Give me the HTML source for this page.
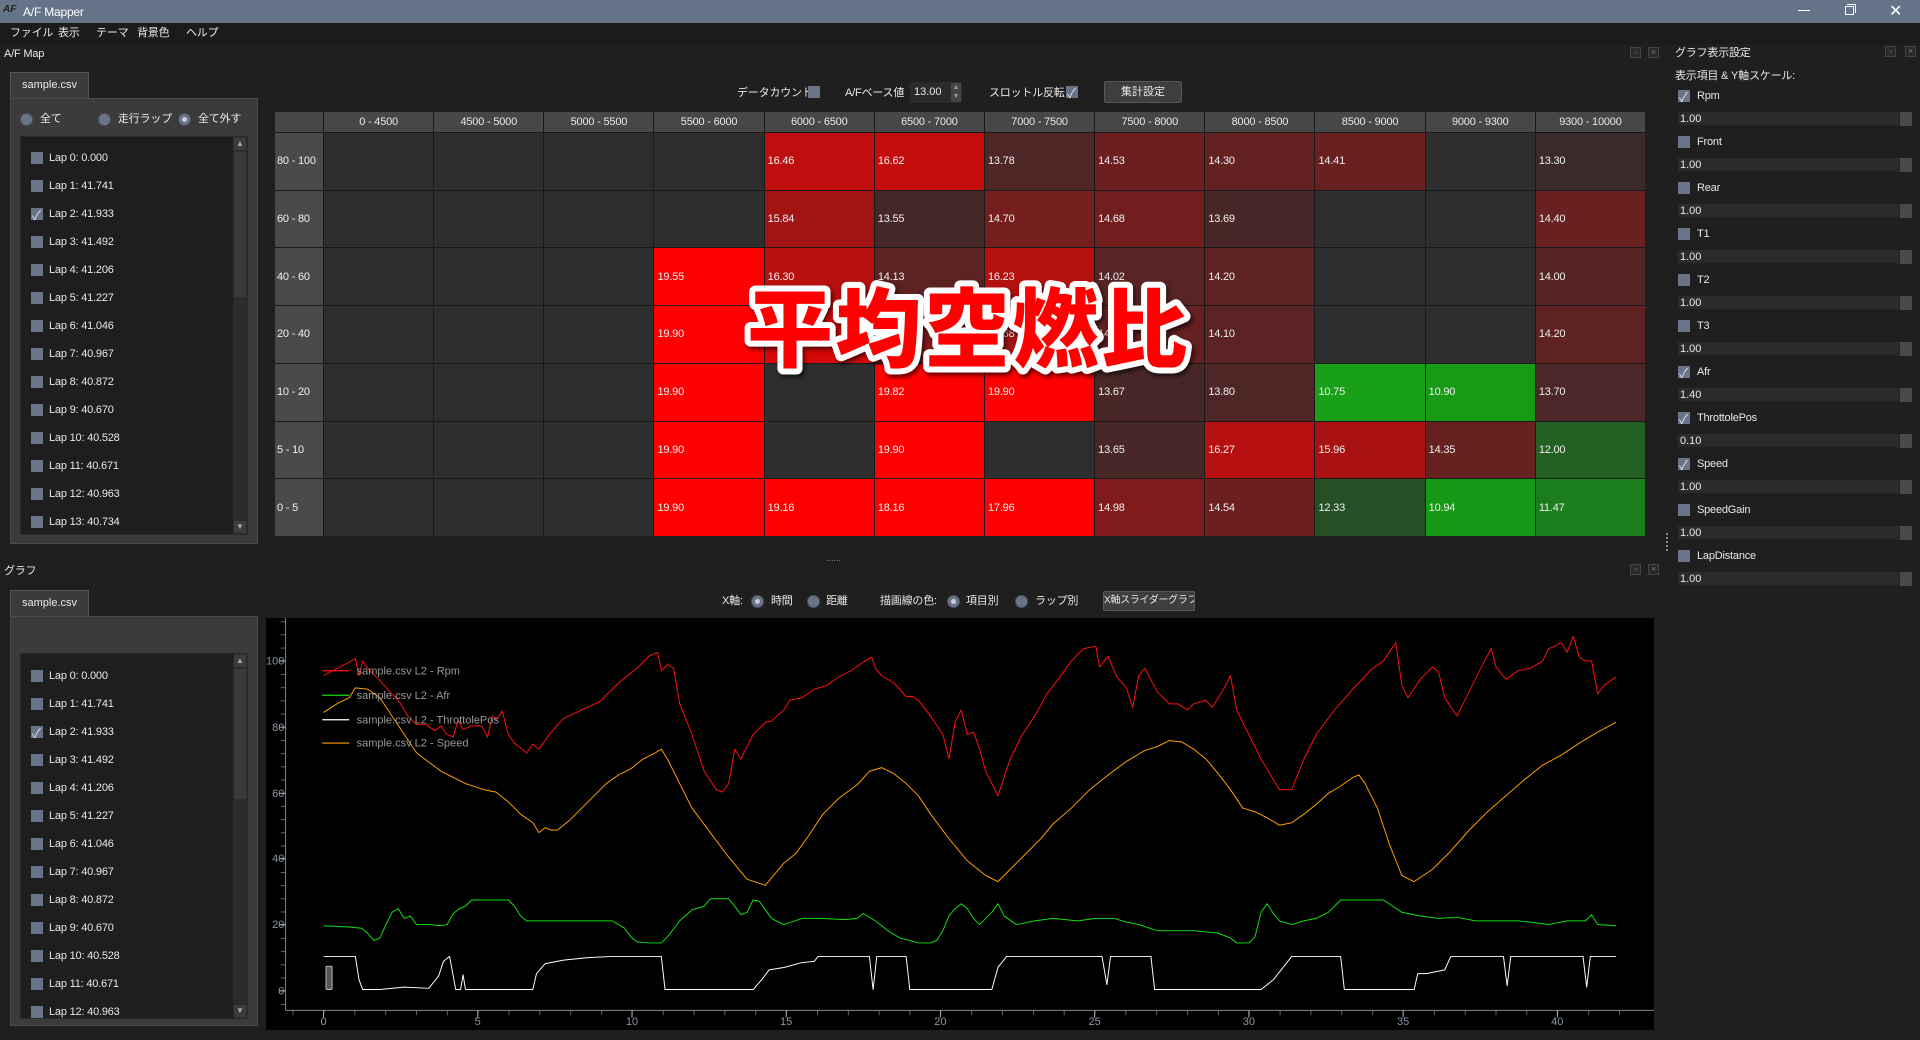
<!DOCTYPE html>
<html><head><meta charset="utf-8">
<style>
*{box-sizing:border-box;margin:0;padding:0}
body{width:1920px;height:1040px;background:#1f1f1f;position:relative;overflow:hidden;font-family:"Liberation Sans","Noto Sans CJK JP",sans-serif;color:#e8e8e8;font-size:11px}
.a{position:absolute;white-space:nowrap}
.t{position:absolute;white-space:nowrap;line-height:14px;font-size:11px;letter-spacing:-0.2px}
.cb{position:absolute;width:12px;height:12px;background:#6a7488}
.cb.k::after{content:"✓";position:absolute;left:1px;top:-3px;font-size:13px;color:#d8dde6}
.rd{position:absolute;width:13px;height:13px;border-radius:50%;background:#6a7488;border:1px solid #4a5262}
.rd.on::after{content:"";position:absolute;left:3px;top:3px;width:5px;height:5px;border-radius:50%;background:#c8ccd4}
.spin{position:absolute;left:1678px;width:234px;height:14px;background:#2b2b2b;border-bottom:1px solid #202020;font-size:11px;line-height:14px;padding-left:2px}
.spin::after{content:"";position:absolute;right:0;top:0;width:12px;height:14px;background:#4a4a4a;border-left:1px solid #222}
.grid{position:absolute;left:275px;top:112px;width:1370px;height:424px;display:grid;grid-template-columns:48px repeat(12,1fr);grid-template-rows:20px repeat(7,1fr);gap:1px;background:#1a1a1a}
.grid div{background:#2e2e2e;font-size:11px;display:flex;align-items:center;padding-left:3px;color:#f0f0f0;letter-spacing:-0.2px}
.grid .h{background:#474747;justify-content:center;padding:0;color:#e8e8e8}
.grid .h0{background:#474747}
.grid .rh{background:#4a4a4a;padding-left:2px}
.panel{position:absolute;left:10px;width:248px;background:#3b3b3b;border:1px solid #4a4a4a}
.tab{position:absolute;left:10px;width:79px;height:26px;background:#3b3b3b;border:1px solid #555;border-bottom:none;font-size:11px;line-height:24px;text-align:center}
.list{position:absolute;left:20px;width:228px;background:#1e1e1e;border:1px solid #2a2a2a;overflow:hidden}
.sb{position:absolute;right:0;top:0;width:14px;height:100%;background:#2c2c2c}
.dk{position:absolute;width:11px;height:11px;border:1px solid #444;background:#2a2a2a;color:#777;font-size:9px;line-height:9px;text-align:center}
.btn{position:absolute;background:#3e3e3e;border:1px solid #585858;border-radius:2px;text-align:center;font-size:11px;white-space:nowrap;overflow:hidden}
</style></head><body>
<div class="a" style="left:0;top:0;width:1920px;height:23px;background:#667489"></div>
<div class="a" style="left:3px;top:4px;font-size:10px;font-style:italic;font-weight:bold;color:#222">AF</div>
<div class="t" style="left:23px;top:5px;font-size:12px;color:#fff">A/F Mapper</div>
<div class="a" style="left:1798px;top:10px;width:12px;height:1px;background:#fff"></div>
<div class="a" style="left:1845px;top:6px;width:9px;height:9px;border:1px solid #fff"></div>
<div class="a" style="left:1847px;top:4px;width:9px;height:9px;border-top:1px solid #fff;border-right:1px solid #fff"></div>
<div class="a" style="left:1889px;top:1px;font-size:16px;color:#fff">✕</div>
<div class="a" style="left:0;top:23px;width:1920px;height:21px;background:#1b1b1b"></div>
<div class="t" style="left:10px;top:26px">ファイル</div>
<div class="t" style="left:58px;top:26px">表示</div>
<div class="t" style="left:96px;top:26px">テーマ</div>
<div class="t" style="left:137px;top:26px">背景色</div>
<div class="t" style="left:186px;top:26px">ヘルプ</div>
<div class="t" style="left:4px;top:47px">A/F Map</div>
<div class="dk" style="left:1630px;top:47px">▫</div><div class="dk" style="left:1648px;top:47px">×</div>

<div class="tab" style="top:72px">sample.csv</div>
<div class="panel" style="top:98px;height:446px"></div>
<div class="rd" style="left:20px;top:113px"></div><div class="t" style="left:40px;top:112px">全て</div>
<div class="rd" style="left:98px;top:113px"></div><div class="t" style="left:118px;top:112px">走行ラップ</div>
<div class="rd on" style="left:178px;top:113px"></div><div class="t" style="left:198px;top:112px">全て外す</div>
<div class="list" style="top:136px;height:399px">
 <div class="sb"><div style="position:absolute;left:1px;top:1px;width:12px;height:12px;background:#3c3c3c;color:#aaa;font-size:8px;text-align:center;line-height:12px">▲</div><div style="position:absolute;left:1px;top:15px;width:12px;height:145px;background:#3a3a3a"></div><div style="position:absolute;left:1px;bottom:1px;width:12px;height:12px;background:#3c3c3c;color:#aaa;font-size:8px;text-align:center;line-height:12px">▼</div></div>
</div>

<div class="t" style="left:737px;top:86px">データカウント</div>
<div class="cb" style="left:808px;top:86px"></div>
<div class="t" style="left:845px;top:86px">A/Fベース値</div>
<div class="a" style="left:910px;top:82px;width:52px;height:21px;background:#2b2b2b;border-radius:2px"><span style="position:absolute;left:4px;top:4px;font-size:11px">13.00</span><span style="position:absolute;right:1px;top:1px;width:10px;height:19px;background:#444;color:#999;font-size:7px;line-height:9px;text-align:center">▲<br>▼</span></div>
<div class="t" style="left:989px;top:86px">スロットル反転</div>
<div class="cb k" style="left:1066px;top:86px"></div>
<div class="btn" style="left:1104px;top:81px;width:78px;height:22px;line-height:20px">集計設定</div>

<div class="grid">
<div class="h0"></div><div class="h">0 - 4500</div><div class="h">4500 - 5000</div><div class="h">5000 - 5500</div><div class="h">5500 - 6000</div><div class="h">6000 - 6500</div><div class="h">6500 - 7000</div><div class="h">7000 - 7500</div><div class="h">7500 - 8000</div><div class="h">8000 - 8500</div><div class="h">8500 - 9000</div><div class="h">9000 - 9300</div><div class="h">9300 - 10000</div>
<div class="rh">80 - 100</div><div></div><div></div><div></div><div></div><div style="background:#be0e0e">16.46</div><div style="background:#c50c0c">16.62</div><div style="background:#4e2626">13.78</div><div style="background:#6d1f1f">14.53</div><div style="background:#642121">14.30</div><div style="background:#682020">14.41</div><div></div><div style="background:#3a2a2a">13.30</div>
<div class="rh">60 - 80</div><div></div><div></div><div></div><div></div><div style="background:#a41313">15.84</div><div style="background:#442828">13.55</div><div style="background:#741e1e">14.70</div><div style="background:#731e1e">14.68</div><div style="background:#4a2727">13.69</div><div></div><div></div><div style="background:#682020">14.40</div>
<div class="rh">40 - 60</div><div></div><div></div><div></div><div style="background:#ff0000">19.55</div><div style="background:#b80f0f">16.30</div><div style="background:#5c2323">14.13</div><div style="background:#b51010">16.23</div><div style="background:#582424">14.02</div><div style="background:#5f2222">14.20</div><div></div><div></div><div style="background:#572424">14.00</div>
<div class="rh">20 - 40</div><div></div><div></div><div></div><div style="background:#ff0000">19.90</div><div style="background:#d90808">17.10</div><div style="background:#811b1b">15.00</div><div style="background:#9e1515">15.68</div><div style="background:#642121">14.30</div><div style="background:#5b2323">14.10</div><div></div><div></div><div style="background:#5f2222">14.20</div>
<div class="rh">10 - 20</div><div></div><div></div><div></div><div style="background:#ff0000">19.90</div><div></div><div style="background:#ff0000">19.82</div><div style="background:#ff0000">19.90</div><div style="background:#4a2727">13.67</div><div style="background:#4f2626">13.80</div><div style="background:#18a018">10.75</div><div style="background:#179b17">10.90</div><div style="background:#4b2727">13.70</div>
<div class="rh">5 - 10</div><div></div><div></div><div></div><div style="background:#ff0000">19.90</div><div></div><div style="background:#ff0000">19.90</div><div></div><div style="background:#4a2727">13.65</div><div style="background:#b61010">16.27</div><div style="background:#a91212">15.96</div><div style="background:#662121">14.35</div><div style="background:#226122">12.00</div>
<div class="rh">0 - 5</div><div></div><div></div><div></div><div style="background:#ff0000">19.90</div><div style="background:#ff0000">19.16</div><div style="background:#ff0000">18.16</div><div style="background:#fd0000">17.96</div><div style="background:#801b1b">14.98</div><div style="background:#6d1f1f">14.54</div><div style="background:#255025">12.33</div><div style="background:#169916">10.94</div><div style="background:#1c7d1c">11.47</div>
</div>
<svg class="a" style="left:735px;top:270px" width="470" height="110">
<text x="12" y="90" font-family="Noto Sans CJK JP,sans-serif" font-weight="900" font-size="86" textLength="440" fill="#ff0000" stroke="#ffffff" stroke-width="12" stroke-linejoin="round" paint-order="stroke" style="filter:drop-shadow(2px 3px 2px rgba(0,0,0,.6))">平均空燃比</text>
</svg>

<div class="a" style="left:826px;top:553px;color:#888;font-size:9px">......</div>
<div class="a" style="left:1666px;top:533px;width:2px;height:18px;border-left:2px dotted #888"></div>

<div class="t" style="left:4px;top:564px">グラフ</div>
<div class="dk" style="left:1630px;top:564px">▫</div><div class="dk" style="left:1648px;top:564px">×</div>
<div class="tab" style="top:590px">sample.csv</div>
<div class="panel" style="top:616px;height:410px"></div>
<div class="list" style="top:653px;height:366px">
 <div class="sb"><div style="position:absolute;left:1px;top:1px;width:12px;height:12px;background:#3c3c3c;color:#aaa;font-size:8px;text-align:center;line-height:12px">▲</div><div style="position:absolute;left:1px;top:15px;width:12px;height:130px;background:#3a3a3a"></div><div style="position:absolute;left:1px;bottom:1px;width:12px;height:12px;background:#3c3c3c;color:#aaa;font-size:8px;text-align:center;line-height:12px">▼</div></div>
</div>

<div class="t" style="left:722px;top:594px">X軸:</div>
<div class="rd on" style="left:751px;top:595px"></div><div class="t" style="left:771px;top:594px">時間</div>
<div class="rd" style="left:807px;top:595px"></div><div class="t" style="left:826px;top:594px">距離</div>
<div class="t" style="left:880px;top:594px">描画線の色:</div>
<div class="rd on" style="left:947px;top:595px"></div><div class="t" style="left:966px;top:594px">項目別</div>
<div class="rd" style="left:1015px;top:595px"></div><div class="t" style="left:1035px;top:594px">ラップ別</div>
<div class="btn" style="left:1103px;top:591px;width:92px;height:20px;line-height:18px;font-size:10px;letter-spacing:-0.3px">X軸スライダーグラフ</div>

<svg class="a" style="left:266px;top:618px" width="1388" height="412" viewBox="217 505 1134 336" preserveAspectRatio="none">
<defs>
<pattern id="xt" patternUnits="userSpaceOnUse" x="264" y="0" width="25.2" height="900"><line x1="0.3" y1="825" x2="0.3" y2="829" stroke="#888" stroke-width="0.6"/></pattern>
<pattern id="yt" patternUnits="userSpaceOnUse" x="0" y="809" width="300" height="10.76"><line x1="229" y1="0.3" x2="233" y2="0.3" stroke="#888" stroke-width="0.6"/></pattern>
</defs>
<rect x="217" y="505" width="1134" height="336" fill="#000"/>
<rect x="225" y="505" width="9" height="320" fill="url(#yt)"/>
<rect x="233" y="820" width="1110" height="10" fill="url(#xt)"/>
<line x1="233" y1="505" x2="233" y2="825" stroke="#888" stroke-width="0.8"/>
<line x1="233" y1="825" x2="1351" y2="825" stroke="#888" stroke-width="0.8"/>
<g stroke="#aaa" stroke-width="0.8"><line x1="228" y1="540" x2="233" y2="540"/><line x1="228" y1="594" x2="233" y2="594"/><line x1="228" y1="648" x2="233" y2="648"/><line x1="228" y1="701" x2="233" y2="701"/><line x1="228" y1="755" x2="233" y2="755"/><line x1="228" y1="809" x2="233" y2="809"/>
<line x1="264" y1="825" x2="264" y2="831"/><line x1="390" y1="825" x2="390" y2="831"/><line x1="516" y1="825" x2="516" y2="831"/><line x1="642" y1="825" x2="642" y2="831"/><line x1="768" y1="825" x2="768" y2="831"/><line x1="894" y1="825" x2="894" y2="831"/><line x1="1020" y1="825" x2="1020" y2="831"/><line x1="1146" y1="825" x2="1146" y2="831"/><line x1="1272" y1="825" x2="1272" y2="831"/></g>
<g font-family="Liberation Sans,sans-serif" font-size="9" fill="#8a96a8" text-anchor="end">
<text x="232" y="543">100</text><text x="232" y="597">80</text><text x="232" y="651">60</text><text x="232" y="704">40</text><text x="232" y="758">20</text><text x="232" y="812">0</text></g>
<g font-family="Liberation Sans,sans-serif" font-size="9" fill="#8a96a8" text-anchor="middle">
<text x="264" y="837">0</text><text x="390" y="837">5</text><text x="516" y="837">10</text><text x="642" y="837">15</text><text x="768" y="837">20</text><text x="894" y="837">25</text><text x="1020" y="837">30</text><text x="1146" y="837">35</text><text x="1272" y="837">40</text></g>
<g fill="none" stroke-width="0.8" stroke-linejoin="round">
<polyline stroke="#ff1010" points="264,552 275,546 285,541 290,538 293,552 296,540 300,546 310,556 318,565 325,572 333,585 340,592 348,592 355,597 360,593 365,600 370,602 374,588 378,596 385,593 393,593 398,602 402,585 405,588 410,581 415,600 420,607 430,615 435,608 440,612 450,598 460,587 475,580 490,573 505,558 520,546 530,536 537,533 540,548 545,543 550,546 555,575 565,600 575,630 585,645 590,647 595,640 600,612 605,620 615,600 625,590 630,589 640,580 645,572 655,570 665,563 675,560 685,553 695,548 705,541 712,537 715,546 720,552 730,558 740,569 745,569 750,572 760,585 770,600 775,620 780,590 785,580 790,600 795,598 800,612 805,630 810,640 815,650 820,635 825,620 835,600 845,585 855,567 865,554 875,540 885,530 895,528 898,545 905,536 912,553 920,562 925,578 930,552 935,546 945,565 955,575 962,575 970,580 975,575 985,572 990,578 995,570 1000,562 1005,552 1010,580 1020,600 1030,620 1045,645 1055,645 1065,620 1075,600 1090,580 1105,563 1120,547 1130,540 1140,525 1145,560 1150,570 1160,555 1170,545 1175,549 1180,570 1190,585 1200,565 1210,545 1218,530 1222,545 1230,555 1240,548 1250,546 1260,540 1265,530 1270,528 1275,525 1280,533 1285,520 1290,537 1295,540 1300,540 1305,567 1310,560 1320,553"/>
<polyline stroke="#ffa000" points="264,582 275,575 285,570 290,562 300,563 310,570 320,585 330,600 340,615 360,630 380,640 395,645 405,647 415,655 425,665 435,672 440,680 445,676 450,678 455,678 465,670 475,660 485,650 495,640 505,633 515,628 525,620 535,615 540,612 545,620 555,640 565,660 580,680 595,700 610,718 625,723 640,705 650,697 660,683 672,665 685,652 700,641 710,630 720,627 730,632 740,640 750,650 760,665 775,685 790,703 805,715 815,720 825,710 840,695 850,685 860,673 875,660 890,645 905,633 920,622 935,613 945,610 955,605 965,606 975,612 985,620 995,632 1005,645 1015,660 1025,663 1035,668 1045,674 1055,672 1065,665 1075,657 1085,648 1095,642 1105,635 1110,633 1115,640 1125,660 1135,690 1145,715 1155,720 1170,710 1185,695 1200,678 1215,663 1230,650 1245,637 1260,625 1275,617 1290,607 1305,598 1320,590"/>
<polyline stroke="#10e010" points="264,756 285,757 295,758 300,762 305,768 310,766 315,755 320,745 325,742 330,750 335,748 340,755 350,755 360,756 365,755 370,746 375,742 380,740 385,735 400,735 415,735 420,740 425,748 430,752 440,752 460,752 480,752 500,752 510,758 515,765 520,769 530,770 540,770 545,765 555,752 565,743 575,740 580,734 595,734 600,740 605,747 610,745 615,735 620,736 625,743 630,750 640,755 655,750 670,750 690,751 700,750 705,746 715,752 725,760 735,766 750,770 760,770 765,768 770,760 775,748 780,742 785,738 790,742 795,750 800,755 810,745 815,738 820,748 830,755 845,752 860,750 880,752 895,750 910,750 920,753 930,755 945,760 960,760 975,760 995,762 1005,766 1010,770 1020,770 1025,765 1030,745 1035,738 1040,746 1045,752 1055,755 1065,752 1075,750 1085,745 1095,735 1100,735 1130,735 1145,745 1160,748 1175,750 1190,749 1205,752 1215,752 1225,752 1240,752 1250,753 1265,755 1280,752 1295,752 1300,747 1305,755 1320,756"/>
<polyline stroke="#ffffff" points="264,781 290,781 293,800 296,808 310,808 330,806 350,807 358,797 362,785 367,781 372,808 376,808 378,796 380,808 395,808 420,808 435,808 438,795 445,787 460,784 480,782 500,781 540,781 543,808 560,808 590,808 615,808 622,800 628,792 640,790 655,786 665,785 668,781 710,781 713,808 716,781 740,781 743,808 780,808 810,808 815,790 822,781 900,781 904,804 907,781 940,781 943,808 1000,808 1030,808 1040,800 1048,790 1055,781 1095,781 1098,808 1155,808 1158,795 1165,795 1180,792 1185,781 1228,781 1231,805 1234,781 1293,781 1296,806 1299,781 1320,781"/>
</g>
<rect x="266" y="789" width="5" height="19" fill="#555" stroke="#ccc" stroke-width="0.7" rx="1"/>
<g stroke-width="1"><line x1="263" y1="548" x2="285" y2="548" stroke="#ff1010"/><line x1="263" y1="568" x2="285" y2="568" stroke="#10e010"/><line x1="263" y1="588" x2="285" y2="588" stroke="#fff"/><line x1="263" y1="607" x2="285" y2="607" stroke="#ffa000"/></g>
<g font-family="Liberation Sans,sans-serif" font-size="9" fill="#999">
<text x="291" y="551">sample.csv L2 - Rpm</text><text x="291" y="571">sample.csv L2 - Afr</text><text x="291" y="591">sample.csv L2 - ThrottolePos</text><text x="291" y="610">sample.csv L2 - Speed</text></g>
</svg>

<div class="t" style="left:1675px;top:46px">グラフ表示設定</div>
<div class="dk" style="left:1885px;top:46px">▫</div><div class="dk" style="left:1905px;top:46px">×</div>
<div class="t" style="left:1675px;top:69px">表示項目 &amp; Y軸スケール:</div>

<div class="cb k" style="left:1678px;top:90px"></div><div class="t" style="left:1697px;top:89px">Rpm</div><div class="spin" style="top:112px">1.00</div>
<div class="cb" style="left:1678px;top:136px"></div><div class="t" style="left:1697px;top:135px">Front</div><div class="spin" style="top:158px">1.00</div>
<div class="cb" style="left:1678px;top:182px"></div><div class="t" style="left:1697px;top:181px">Rear</div><div class="spin" style="top:204px">1.00</div>
<div class="cb" style="left:1678px;top:228px"></div><div class="t" style="left:1697px;top:227px">T1</div><div class="spin" style="top:250px">1.00</div>
<div class="cb" style="left:1678px;top:274px"></div><div class="t" style="left:1697px;top:273px">T2</div><div class="spin" style="top:296px">1.00</div>
<div class="cb" style="left:1678px;top:320px"></div><div class="t" style="left:1697px;top:319px">T3</div><div class="spin" style="top:342px">1.00</div>
<div class="cb k" style="left:1678px;top:366px"></div><div class="t" style="left:1697px;top:365px">Afr</div><div class="spin" style="top:388px">1.40</div>
<div class="cb k" style="left:1678px;top:412px"></div><div class="t" style="left:1697px;top:411px">ThrottolePos</div><div class="spin" style="top:434px">0.10</div>
<div class="cb k" style="left:1678px;top:458px"></div><div class="t" style="left:1697px;top:457px">Speed</div><div class="spin" style="top:480px">1.00</div>
<div class="cb" style="left:1678px;top:504px"></div><div class="t" style="left:1697px;top:503px">SpeedGain</div><div class="spin" style="top:526px">1.00</div>
<div class="cb" style="left:1678px;top:550px"></div><div class="t" style="left:1697px;top:549px">LapDistance</div><div class="spin" style="top:572px">1.00</div>

<div class="cb" style="left:31px;top:152px"></div><div class="t" style="left:49px;top:151px">Lap 0: 0.000</div>
<div class="cb" style="left:31px;top:180px"></div><div class="t" style="left:49px;top:179px">Lap 1: 41.741</div>
<div class="cb k" style="left:31px;top:208px"></div><div class="t" style="left:49px;top:207px">Lap 2: 41.933</div>
<div class="cb" style="left:31px;top:236px"></div><div class="t" style="left:49px;top:235px">Lap 3: 41.492</div>
<div class="cb" style="left:31px;top:264px"></div><div class="t" style="left:49px;top:263px">Lap 4: 41.206</div>
<div class="cb" style="left:31px;top:292px"></div><div class="t" style="left:49px;top:291px">Lap 5: 41.227</div>
<div class="cb" style="left:31px;top:320px"></div><div class="t" style="left:49px;top:319px">Lap 6: 41.046</div>
<div class="cb" style="left:31px;top:348px"></div><div class="t" style="left:49px;top:347px">Lap 7: 40.967</div>
<div class="cb" style="left:31px;top:376px"></div><div class="t" style="left:49px;top:375px">Lap 8: 40.872</div>
<div class="cb" style="left:31px;top:404px"></div><div class="t" style="left:49px;top:403px">Lap 9: 40.670</div>
<div class="cb" style="left:31px;top:432px"></div><div class="t" style="left:49px;top:431px">Lap 10: 40.528</div>
<div class="cb" style="left:31px;top:460px"></div><div class="t" style="left:49px;top:459px">Lap 11: 40.671</div>
<div class="cb" style="left:31px;top:488px"></div><div class="t" style="left:49px;top:487px">Lap 12: 40.963</div>
<div class="cb" style="left:31px;top:516px"></div><div class="t" style="left:49px;top:515px">Lap 13: 40.734</div>

<div class="cb" style="left:31px;top:670px"></div><div class="t" style="left:49px;top:669px">Lap 0: 0.000</div>
<div class="cb" style="left:31px;top:698px"></div><div class="t" style="left:49px;top:697px">Lap 1: 41.741</div>
<div class="cb k" style="left:31px;top:726px"></div><div class="t" style="left:49px;top:725px">Lap 2: 41.933</div>
<div class="cb" style="left:31px;top:754px"></div><div class="t" style="left:49px;top:753px">Lap 3: 41.492</div>
<div class="cb" style="left:31px;top:782px"></div><div class="t" style="left:49px;top:781px">Lap 4: 41.206</div>
<div class="cb" style="left:31px;top:810px"></div><div class="t" style="left:49px;top:809px">Lap 5: 41.227</div>
<div class="cb" style="left:31px;top:838px"></div><div class="t" style="left:49px;top:837px">Lap 6: 41.046</div>
<div class="cb" style="left:31px;top:866px"></div><div class="t" style="left:49px;top:865px">Lap 7: 40.967</div>
<div class="cb" style="left:31px;top:894px"></div><div class="t" style="left:49px;top:893px">Lap 8: 40.872</div>
<div class="cb" style="left:31px;top:922px"></div><div class="t" style="left:49px;top:921px">Lap 9: 40.670</div>
<div class="cb" style="left:31px;top:950px"></div><div class="t" style="left:49px;top:949px">Lap 10: 40.528</div>
<div class="cb" style="left:31px;top:978px"></div><div class="t" style="left:49px;top:977px">Lap 11: 40.671</div>
<div class="cb" style="left:31px;top:1006px"></div><div class="t" style="left:49px;top:1005px">Lap 12: 40.963</div>
</body></html>
